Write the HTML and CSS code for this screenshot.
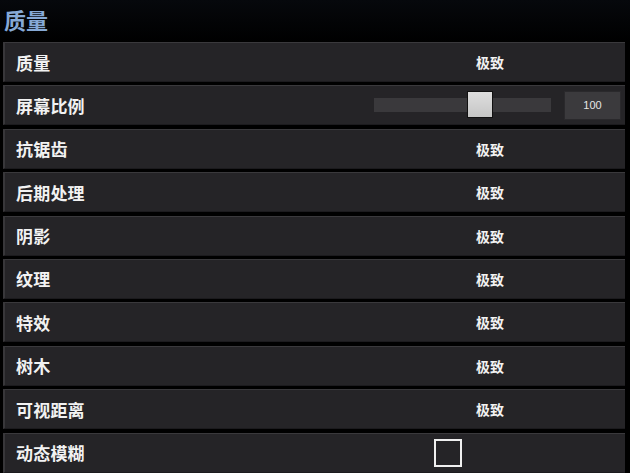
FILE: index.html
```html
<!DOCTYPE html>
<html lang="zh">
<head>
<meta charset="utf-8">
<link rel="stylesheet" href="styles.css">
</head>
<body>
<div class="panel">
  <h1 class="title">质量</h1>
  <div class="list">
    <div class="row"><span class="label">质量</span><span class="value">极致</span></div>
    <div class="row row-slider">
      <span class="label">屏幕比例</span>
      <div class="slider">
        <div class="track"><div class="thumb"></div></div>
        <div class="num">100</div>
      </div>
    </div>
    <div class="row"><span class="label">抗锯齿</span><span class="value">极致</span></div>
    <div class="row"><span class="label">后期处理</span><span class="value">极致</span></div>
    <div class="row"><span class="label">阴影</span><span class="value">极致</span></div>
    <div class="row"><span class="label">纹理</span><span class="value">极致</span></div>
    <div class="row"><span class="label">特效</span><span class="value">极致</span></div>
    <div class="row"><span class="label">树木</span><span class="value">极致</span></div>
    <div class="row"><span class="label">可视距离</span><span class="value">极致</span></div>
    <div class="row row-check"><span class="label">动态模糊</span><span class="check"></span></div>
  </div>
</div>
</body>
</html>
```

FILE: styles.css
```css
html, body {
  margin: 0;
  padding: 0;
  background: #000;
  width: 630px;
  height: 473px;
  overflow: hidden;
}
.panel {
  font-family: "Noto Sans CJK SC", "Noto Sans", sans-serif;
  color: #f2f2f2;
}
.title {
  margin: 0;
  height: 42px;
  padding-left: 4px;
  font-size: 22px;
  font-weight: 700;
  line-height: 39px;
  color: #86a9d6;
  background: linear-gradient(#06080c, #000);
}
.list {
  display: flex;
  flex-direction: column;
  gap: 3.4px;
  margin: 0 5px 0 3px;
}
.row {
  height: 40px;
  box-sizing: border-box;
  display: grid;
  grid-template-columns: 471px 1fr;
  align-items: center;
  background: #252427;
  border-top: 1px solid #3a393c;
  border-left: 2px solid #38373a;
  border-bottom: 1px solid #1c1b1e;
}
.label {
  padding-left: 11px;
  font-size: 17px;
  font-weight: 700;
  letter-spacing: 0.2px;
}
.value {
  font-size: 14px;
  font-weight: 700;
}
.row-slider {
  display: flex;
  justify-content: space-between;
}
.slider {
  display: flex;
  align-items: center;
  gap: 13px;
  padding-right: 4px;
}
.track {
  position: relative;
  width: 177px;
  height: 14px;
  background: #3a393c;
}
.thumb {
  position: absolute;
  left: 93px;
  top: -7px;
  width: 26px;
  height: 27px;
  background: linear-gradient(#dedede, #c6c6c6);
  border: 1px solid #111;
  box-sizing: border-box;
}
.num {
  width: 57px;
  height: 29px;
  background: #3b3a3d;
  border: 1px solid #2a292c;
  box-sizing: border-box;
  font-family: "Liberation Sans", sans-serif;
  font-size: 11px;
  color: #e6e6e6;
  display: flex;
  align-items: center;
  justify-content: center;
}
.row-check {
  grid-template-columns: 429px 1fr;
}
.check {
  width: 28px;
  height: 28px;
  box-sizing: border-box;
  border: 2px solid #f0f0f0;
}
```
